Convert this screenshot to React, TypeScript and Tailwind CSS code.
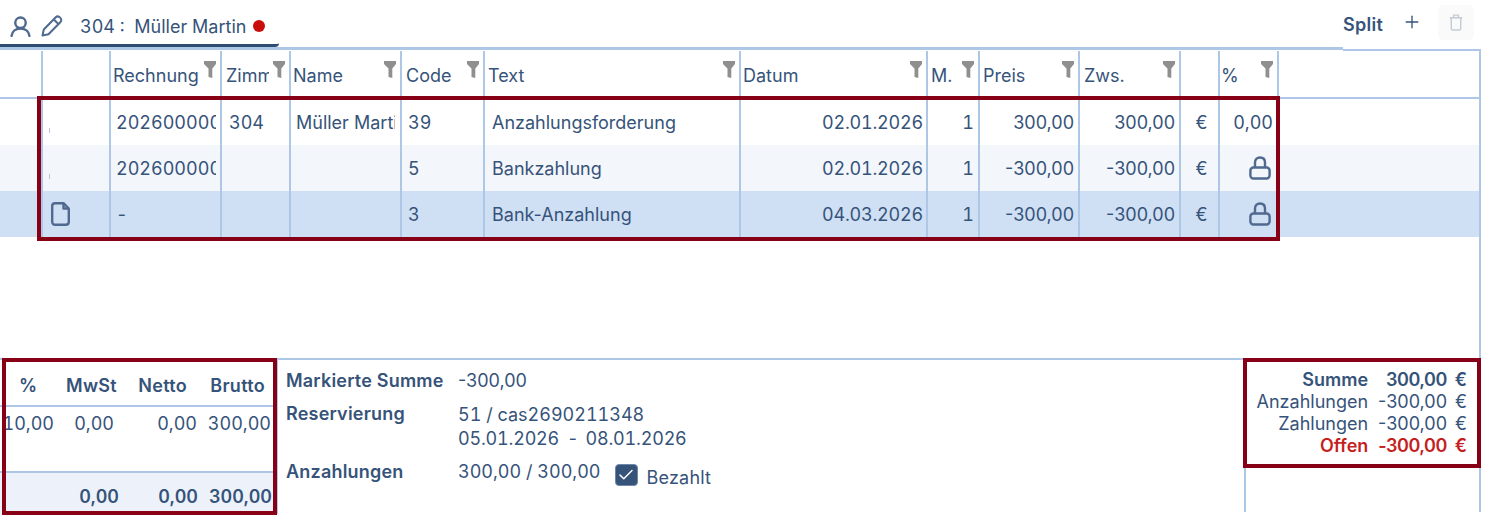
import { Check, Plus } from "lucide-react";

const columns = [43, 68, 111, 69, 111, 83, 256, 187, 52, 100, 101, 39, 59, 202];

const headers = [
  { label: "", pad: "", filter: false },
  { label: "", pad: "", filter: false },
  { label: "Rechnung", pad: "pl-[2px]", filter: true },
  { label: "Zimmer", pad: "pl-[4px]", filter: true },
  { label: "Name", pad: "pl-[2px]", filter: true },
  { label: "Code", pad: "pl-[4px]", filter: true },
  { label: "Text", pad: "pl-[3px]", filter: true },
  { label: "Datum", pad: "pl-[2px]", filter: true },
  { label: "M.", pad: "pl-[3px]", filter: true },
  { label: "Preis", pad: "pl-[3px]", filter: true },
  { label: "Zws.", pad: "pl-[4px]", filter: true },
  { label: "", pad: "", filter: false },
  { label: "%", pad: "pl-[1px]", filter: true },
  { label: "", pad: "", filter: false },
];

const rows = [
  {
    bg: "bg-white",
    icon: false,
    invoice: "202600000012",
    room: "304",
    name: "Müller Martin",
    code: "39",
    text: "Anzahlungsforderung",
    date: "02.01.2026",
    price: "300,00",
    locked: false,
  },
  {
    bg: "bg-[#f3f6fb]",
    icon: false,
    invoice: "202600000013",
    room: "",
    name: "",
    code: "5",
    text: "Bankzahlung",
    date: "02.01.2026",
    price: "-300,00",
    locked: true,
  },
  {
    bg: "bg-[#cfdff4]",
    icon: true,
    invoice: "-",
    room: "",
    name: "",
    code: "3",
    text: "Bank-Anzahlung",
    date: "04.03.2026",
    price: "-300,00",
    locked: true,
  },
];

function FilterIcon() {
  return (
    <svg viewBox="0 0 12 18" className="absolute right-[4px] top-[10px] h-[18px] w-[12px]" fill="#8f8f8f">
      <path d="M0 0H12V3L8.3 7.5V17L4.5 16V7.5L0 3Z" />
    </svg>
  );
}

function UserIcon() {
  return (
    <svg viewBox="0 0 20 20" className="h-[21px] w-[21px]" fill="none" stroke="#50698e" strokeWidth="2.3" strokeLinecap="round">
      <circle cx="10" cy="6.5" r="5" />
      <path d="M1.5 19C2 15 5 12 10 12C15 12 18 15 18.5 19" />
    </svg>
  );
}

function PenIcon() {
  return (
    <svg viewBox="0 0 22 22" className="ml-[10px] h-[22px] w-[22px]" fill="none" stroke="#50698e" strokeWidth="2" strokeLinejoin="round">
      <path d="M1.5 20.5L2.8 14.5L14.5 2.5C15.8 1.2 17.8 1.2 19.2 2.6C20.6 4 20.6 6 19.3 7.3L7.5 19.2Z" />
      <path d="M12.8 4.5L17.4 9" />
    </svg>
  );
}

function LockIcon() {
  return (
    <svg viewBox="0 0 22 24" className="mb-[1px] mr-[2px] h-[24px] w-[22px]" fill="none" stroke="#50698e" strokeWidth="2.4">
      <rect x="1.4" y="11.5" width="19.2" height="11" rx="3" />
      <path d="M6 11.5V6.5C6 3.5 8 1.5 11 1.5C14 1.5 16 3.5 16 6.5V11.5" />
    </svg>
  );
}

function FileIcon() {
  return (
    <svg viewBox="0 0 19 24" className="ml-[2px] h-[24px] w-[19px]" fill="none" stroke="#50698e" strokeWidth="2.4" strokeLinejoin="round">
      <path d="M4 1.2H12.5L17.8 6.5V19.8C17.8 21.5 16.5 22.8 14.8 22.8H4C2.3 22.8 1.2 21.5 1.2 19.8V4C1.2 2.5 2.3 1.2 4 1.2Z" />
      <path d="M12.5 1.5V6.5H17.5" />
    </svg>
  );
}

function Cell({ children, className = "" }: { children?: React.ReactNode; className?: string }) {
  return (
    <div className={`flex min-w-0 items-center overflow-hidden whitespace-nowrap border-r-2 border-[#afc7e6] ${className}`}>
      {children}
    </div>
  );
}

const gridStyle = { gridTemplateColumns: columns.map((w) => `${w}px`).join(" ") };

function Redbox({ className }: { className: string }) {
  return <div className={`pointer-events-none absolute border-[4px] border-[#880015] ${className}`} />;
}

export default function App() {
  return (
    <div className="h-[516px] w-[1491px] overflow-hidden bg-white font-['Inter',sans-serif] text-[18px] text-[#36537a]">
      {/* Tabs */}
      <div className="flex h-[51px] w-[1481px] items-start">
        <div className="h-[50px] w-[1343px] border-b-[3px] border-[#afc7e6]">
          <div className="flex h-[47px] w-[279px] items-center rounded-br-sm border-b-[3px] border-[#2f4d73] pl-[10px] pt-[8px]">
            <UserIcon />
            <PenIcon />
            <span className="ml-[17px] whitespace-pre tabular-nums">304 :  Müller Martin</span>
            <span className="ml-[7px] h-[12px] w-[12px] rounded-full bg-[#c90d0d]" />
          </div>
        </div>
        <div className="flex h-[51px] flex-1 items-start border-b-2 border-[#afc7e6] pt-[5px]">
          <span className="mt-[6px] font-semibold tracking-[0.3px]">Split</span>
          <Plus className="ml-[19px] mt-[7px] h-[20px] w-[20px]" strokeWidth={1.6} />
          <div className="ml-[16px] flex h-[35px] w-[36px] items-center justify-center rounded-md bg-[#fafafa]">
            <svg viewBox="0 0 14 18" className="h-[17px] w-[14px]" fill="none" stroke="#c3ccd6" strokeWidth="1.5">
              <path d="M0.5 4H13.5M2 4V15.5C2 16.3 2.7 17 3.5 17H10.5C11.3 17 12 16.3 12 15.5V4M4.5 4V1.2H9.5V4" />
            </svg>
          </div>
        </div>
      </div>

      {/* Table header */}
      <div className="grid h-[48px] w-[1481px] border-b-2 border-[#afc7e6]" style={gridStyle}>
        {headers.map((h, i) => (
          <div key={i} className={`relative flex items-center overflow-hidden border-r-2 border-[#afc7e6] pt-[2px] ${h.pad}`}>
            <span className={i === 3 ? "block w-[43px] overflow-hidden" : ""}>{h.label}</span>
            {h.filter && <FilterIcon />}
          </div>
        ))}
      </div>

      {/* Table rows */}
      <div className="relative w-[1481px]">
        {rows.map((row, i) => (
          <div key={i} className={`grid h-[46px] w-[1481px] ${row.bg}`} style={gridStyle}>
            <div className="border-r-2 border-[#afc7e6]" />
            <Cell className="pl-[6px]">
              {row.icon ? <FileIcon /> : <span className="mt-[16px] h-[5px] w-px bg-[#b9c5d6]" />}
            </Cell>
            <Cell className="pl-[5px]">
              <span className="block w-[100px] overflow-hidden tabular-nums">{row.invoice}</span>
            </Cell>
            <Cell className="pl-[7px] tabular-nums">{row.room}</Cell>
            <Cell className="pl-[5px]">
              <span className="block w-[99px] overflow-hidden">{row.name}</span>
            </Cell>
            <Cell className="pl-[6px] tabular-nums">{row.code}</Cell>
            <Cell className="pl-[7px]">{row.text}</Cell>
            <Cell className="justify-end pr-[3px] tabular-nums tracking-[-0.2px]">{row.date}</Cell>
            <Cell className="justify-end pr-[4px] tabular-nums">1</Cell>
            <Cell className="justify-end pr-[4px]">{row.price}</Cell>
            <Cell className="justify-end pr-[4px]">{row.price}</Cell>
            <Cell className="justify-center pl-[4px]">€</Cell>
            <Cell className="justify-end pr-[4px] tabular-nums">
              {row.locked ? <LockIcon /> : "0,00"}
            </Cell>
            <div className="border-r-2 border-[#afc7e6]" />
          </div>
        ))}
        <Redbox className="left-[37px] top-[-3px] h-[145px] w-[1243px]" />
      </div>

      {/* Spacer */}
      <div className="h-[123px] w-[1481px] border-b-2 border-r-2 border-[#afc7e6]" />

      {/* Footer */}
      <div className="flex h-[156px] w-[1481px]">
        <div className="relative flex h-[154px] w-[278px] flex-col border-r border-[#afc7e6]">
          <div className="grid h-[47px] grid-cols-[33px_84px_70px_78px] items-center border-b-2 border-[#afc7e6] pt-[6px] font-semibold tracking-[0.3px]">
            <span className="pl-[19px]">%</span>
            <span className="text-right">MwSt</span>
            <span className="text-right">Netto</span>
            <span className="text-right">Brutto</span>
          </div>
          <div className="grid h-[66px] grid-cols-[54px_60px_83px_74px] border-b-2 border-[#afc7e6] pt-[3px] tabular-nums">
            <span className="text-right">10,00</span>
            <span className="text-right">0,00</span>
            <span className="text-right">0,00</span>
            <span className="text-right">300,00</span>
          </div>
          <div className="grid flex-1 grid-cols-[119px_79px_74px] bg-[#edf2fa] pt-[10px] font-semibold tabular-nums">
            <span className="text-right">0,00</span>
            <span className="text-right">0,00</span>
            <span className="text-right">300,00</span>
          </div>
          <Redbox className="left-[2px] top-[-2px] h-[157px] w-[275px]" />
        </div>

        <div className="flex-1 pl-[8px] pt-[7px]">
          <div className="flex h-[33px]">
            <span className="w-[172px] font-semibold tracking-[0.2px]">Markierte Summe</span>
            <span>-300,00</span>
          </div>
          <div className="flex">
            <span className="w-[172px] font-semibold tracking-[0.2px]">Reservierung</span>
            <div className="pt-[3px] leading-[24px] tabular-nums">
              <div>51 / cas2690211348</div>
              <div className="flex tracking-[-0.2px]">
                <span>05.01.2026</span>
                <span className="ml-[8px] mr-[7px]">-</span>
                <span>08.01.2026</span>
              </div>
            </div>
          </div>
          <div className="mt-[7px] flex">
            <span className="w-[172px] font-semibold tracking-[0.2px]">Anzahlungen</span>
            <span className="tabular-nums">300,00 / 300,00</span>
            <span className="ml-[14px] mt-[6px] flex h-[22px] w-[23px] items-center justify-center rounded-[4px] border border-[#6f87a8] bg-[#36537a]">
              <Check className="h-[18px] w-[18px] text-white" strokeWidth={2} />
            </span>
            <span className="ml-[9px] mt-[6px] tracking-[0.2px]">Bezahlt</span>
          </div>
        </div>

        <div className="relative h-[152px] w-[237px] border-x-2 border-[#afc7e6] pr-[12px] pt-[9px] text-right leading-[22px]">
          <div className="font-semibold">
            <span>Summe</span>
            <span className="ml-[18px] tracking-[-0.5px]">300,00</span>
            <span className="ml-[8px]">€</span>
          </div>
          <div>
            <span>Anzahlungen</span>
            <span className="ml-[10px]">-300,00</span>
            <span className="ml-[8px]">€</span>
          </div>
          <div>
            <span>Zahlungen</span>
            <span className="ml-[10px]">-300,00</span>
            <span className="ml-[8px]">€</span>
          </div>
          <div className="font-semibold text-[#c51f1f]">
            <span>Offen</span>
            <span className="ml-[10px] tracking-[-0.5px]">-300,00</span>
            <span className="ml-[8px]">€</span>
          </div>
          <Redbox className="left-[-3px] top-[-2px] h-[110px] w-[238px]" />
        </div>
      </div>
    </div>
  );
}
